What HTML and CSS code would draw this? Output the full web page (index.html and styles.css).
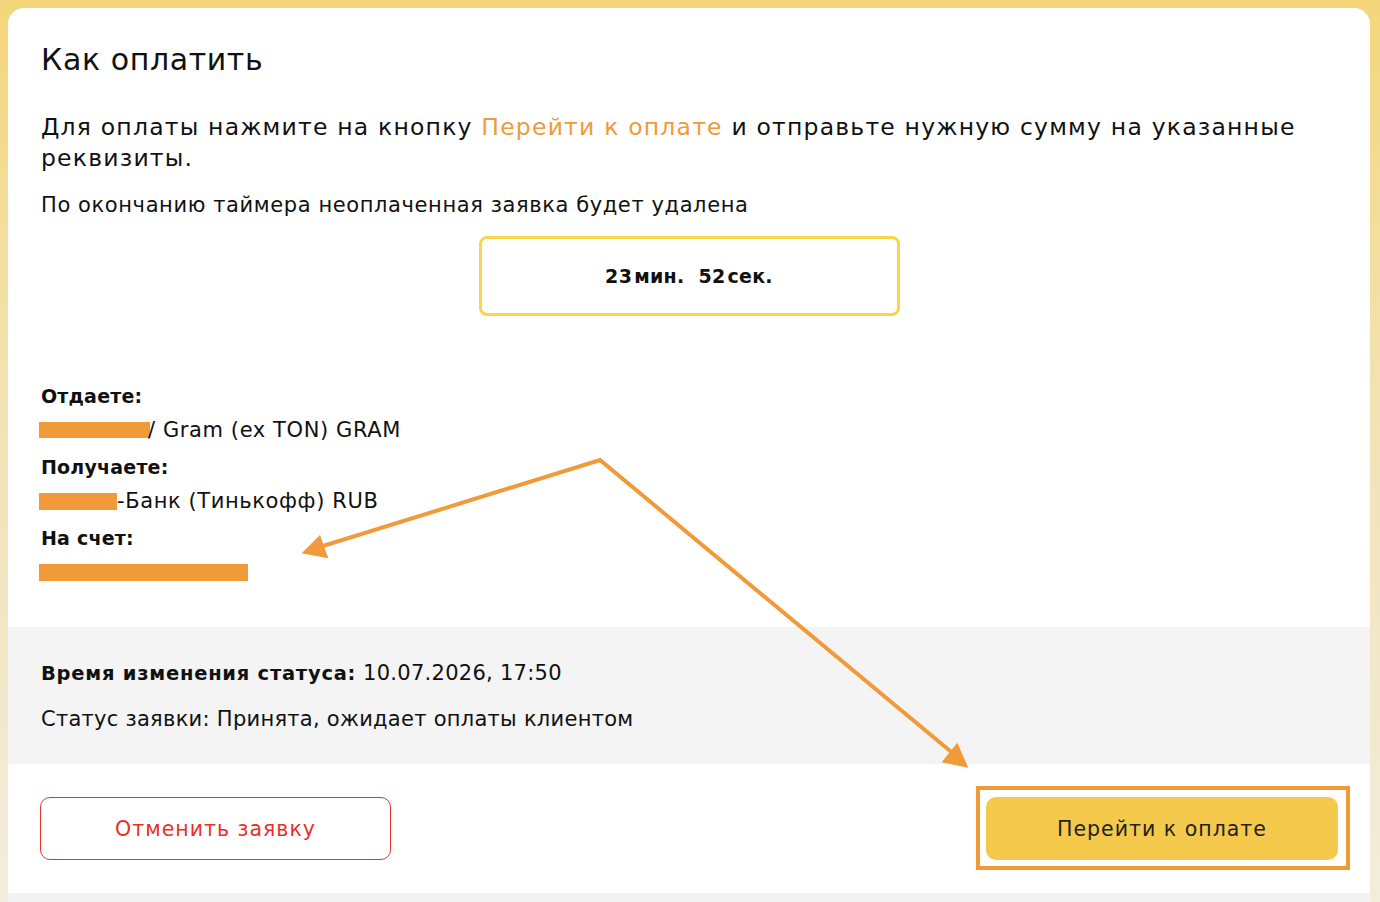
FILE: index.html
```html
<!DOCTYPE html>
<html lang="ru">
<head>
<meta charset="utf-8">
<title>Как оплатить</title>
<link rel="stylesheet" href="styles.css">
</head>
<body>
<div class="page">
  <div class="card">
    <div class="main">
      <h1 class="title">Как оплатить</h1>
      <p class="lead"><span>Для оплаты нажмите на кнопку</span> <span class="accent">Перейти к оплате</span> <span>и отправьте нужную сумму на указанные</span><br><span>реквизиты.</span></p>
      <p class="note">По окончанию таймера неоплаченная заявка будет удалена</p>
      <div class="timer-wrap">
        <div class="timer">23<span class="unit">мин.</span>&nbsp; 52<span class="unit">сек.</span></div>
      </div>
      <div class="details">
        <div class="label">Отдаете:</div>
        <div class="value"><span class="redact r1"></span>/ Gram (ex TON) GRAM</div>
        <div class="label">Получаете:</div>
        <div class="value"><span class="redact r2"></span>-Банк (Тинькофф) RUB</div>
        <div class="label">На счет:</div>
        <div class="value value-bar"><span class="redact r3"></span></div>
      </div>
    </div>
    <div class="status">
      <div class="status-line"><b>Время изменения статуса:</b> 10.07.2026, 17:50</div>
      <div class="status-line">Статус заявки: Принята, ожидает оплаты клиентом</div>
    </div>
    <div class="actions">
      <button class="btn btn-cancel">Отменить заявку</button>
      <div class="pay-wrap">
        <button class="btn btn-pay">Перейти к оплате</button>
      </div>
    </div>
  </div>
  <div class="strip"></div>

  <svg class="arrows" width="1380" height="902" viewBox="0 0 1380 902">
    <polyline points="310,550 600,460 955,755" fill="none" stroke="#f09a3a" stroke-width="4" stroke-linejoin="miter"/>
    <polygon points="301.7,553.3 320,535 328.3,558.3" fill="#f09a3a"/>
    <polygon points="968.3,767.7 957.3,742.7 941.7,762.3" fill="#f09a3a"/>
  </svg>
</div>
</body>
</html>
```

FILE: styles.css
```css
* { box-sizing: border-box; }
html, body { margin: 0; padding: 0; }
body {
  font-family: "DejaVu Sans", "Noto Sans", sans-serif;
  color: #111;
  background: linear-gradient(180deg, #f4d67b 0%, #f2e3b4 45%, #f2ecdc 100%);
  width: 1380px;
  height: 902px;
  overflow: hidden;
}
.page {
  position: relative;
  padding: 8px 10px 0 8px;
  height: 902px;
  display: flex;
  flex-direction: column;
}
.card {
  background: #fff;
  border-radius: 16px 16px 0 0;
  overflow: hidden;
}
.main {
  padding: 34px 33px 46px 33px;
}
.title {
  margin: 0;
  font-size: 30px;
  line-height: 36px;
  font-weight: 400;
  letter-spacing: 0.6px;
}
.lead {
  margin: 33px 0 0;
  padding-top: 1px;
  font-size: 23.5px;
  line-height: 31px;
  letter-spacing: 1.2px;
}
.accent {
  color: #f09a3a;
}
.note {
  margin: 19px 0 0;
  font-size: 21px;
  line-height: 24px;
  letter-spacing: 0.6px;
}
.timer-wrap {
  margin-top: 19px;
  display: flex;
  justify-content: center;
}
.timer {
  width: 421px;
  height: 80px;
  border: 3px solid #f8d54c;
  border-radius: 8px;
  display: flex;
  align-items: center;
  justify-content: center;
  font-weight: 700;
  font-size: 19px;
  letter-spacing: 0.3px;
}
.timer .unit { margin-left: 2px; }
.details {
  margin-top: 68px;
  font-size: 21px;
  line-height: 24px;
  letter-spacing: 0.6px;
}
.label {
  font-weight: 700;
  font-size: 19px;
  letter-spacing: 0.2px;
  margin-top: 13px;
}
.label:first-child { margin-top: 0; }
.value {
  margin-top: 10px;
  height: 24px;
  display: flex;
  align-items: center;
}
.value-bar {
  margin-top: 14px;
  height: 17px;
}
.redact {
  display: inline-block;
  background: #f09a3a;
  margin-left: -2px;
}
.r1 { width: 111px; height: 16px; margin-right: -2px; }
.r2 { width: 78px; height: 17px; }
.r3 { width: 209px; height: 17px; }
.status {
  background: #f4f4f4;
  padding: 34px 33px 33px;
  font-size: 21px;
  line-height: 24px;
  letter-spacing: 0.27px;
}
.status-line + .status-line { margin-top: 21px; }
.status-line b { font-weight: 700; font-size: 19.5px; letter-spacing: 0.75px; }
.actions {
  display: flex;
  justify-content: space-between;
  padding: 33px 32px;
}
.pay-wrap {
  position: relative;
}
.pay-wrap::after {
  content: "";
  position: absolute;
  top: -11px;
  left: -10px;
  right: -12px;
  bottom: -10px;
  border: 4px solid #f09a3a;
  pointer-events: none;
}
.btn {
  display: block;
  font-family: inherit;
  width: 352px;
  height: 63px;
  border-radius: 10px;
  font-size: 20.5px;
  font-weight: 400;
  letter-spacing: 1px;
  cursor: pointer;
}
.btn-cancel {
  background: #fff;
  border: 1px solid #e8302a;
  color: #e8302a;
  width: 351px;
}
.btn-pay {
  background: #f5c94c;
  border: none;
  color: #222;
}
.strip {
  flex: 1;
  background: #f3f3f3;
}
.arrows {
  position: absolute;
  left: 0;
  top: 0;
  pointer-events: none;
}
```
